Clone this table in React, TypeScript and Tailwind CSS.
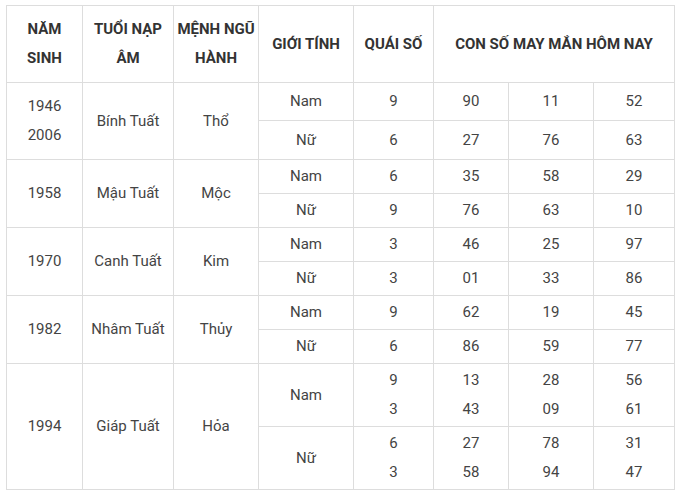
import React from "react";

const td = "border border-[#dddddd] text-center align-middle px-0 py-0";
const th = "border border-[#dddddd] text-center align-middle px-0 py-0 font-bold text-[#333333] whitespace-nowrap";

type Sub = { g: string; q: string; n: string[] };
type Group = { year: string; tuoi: string; menh: string; h: number[]; subs: Sub[] };

const groups: Group[] = [
  {
    year: "1946\n2006",
    tuoi: "Bính Tuất",
    menh: "Thổ",
    h: [38, 39],
    subs: [
      { g: "Nam", q: "9", n: ["90", "11", "52"] },
      { g: "Nữ", q: "6", n: ["27", "76", "63"] },
    ],
  },
  {
    year: "1958",
    tuoi: "Mậu Tuất",
    menh: "Mộc",
    h: [34, 34],
    subs: [
      { g: "Nam", q: "6", n: ["35", "58", "29"] },
      { g: "Nữ", q: "9", n: ["76", "63", "10"] },
    ],
  },
  {
    year: "1970",
    tuoi: "Canh Tuất",
    menh: "Kim",
    h: [34, 34],
    subs: [
      { g: "Nam", q: "3", n: ["46", "25", "97"] },
      { g: "Nữ", q: "3", n: ["01", "33", "86"] },
    ],
  },
  {
    year: "1982",
    tuoi: "Nhâm Tuất",
    menh: "Thủy",
    h: [34, 34],
    subs: [
      { g: "Nam", q: "9", n: ["62", "19", "45"] },
      { g: "Nữ", q: "6", n: ["86", "59", "77"] },
    ],
  },
  {
    year: "1994",
    tuoi: "Giáp Tuất",
    menh: "Hỏa",
    h: [63, 63],
    subs: [
      { g: "Nam", q: "9\n3", n: ["13\n43", "28\n09", "56\n61"] },
      { g: "Nữ", q: "6\n3", n: ["27\n58", "78\n94", "31\n47"] },
    ],
  },
];

function Lines({ t }: { t: string }) {
  const parts = t.split("\n");
  return (
    <>
      {parts.map((p, i) => (
        <React.Fragment key={i}>
          {i > 0 && <br />}
          {p}
        </React.Fragment>
      ))}
    </>
  );
}

export default function App() {
  return (
    <div className="w-[679px] h-[499px] bg-white pt-[5px] pl-[6px] overflow-hidden">
      <table
        className="table-fixed border-collapse w-[669px] text-[15px] leading-[29px] text-[#444444]"
        style={{ fontFamily: "Roboto, 'Noto Sans', Arial, sans-serif" }}
      >
        <colgroup>
          <col className="w-[76px]" />
          <col className="w-[91px]" />
          <col className="w-[85px]" />
          <col className="w-[95px]" />
          <col className="w-[80px]" />
          <col className="w-[75px]" />
          <col className="w-[85px]" />
          <col className="w-[81px]" />
        </colgroup>
        <tbody>
          <tr className="h-[77px]">
            <td className={th}>
              NĂM
              <br />
              SINH
            </td>
            <td className={th}>
              TUỔI NẠP
              <br />
              ÂM
            </td>
            <td className={th}>
              MỆNH NGŨ
              <br />
              HÀNH
            </td>
            <td className={th}>GIỚI TÍNH</td>
            <td className={th}>QUÁI SỐ</td>
            <td className={th} colSpan={3}>
              CON SỐ MAY MẮN HÔM NAY
            </td>
          </tr>
          {groups.map((g) =>
            g.subs.map((s, i) => (
              <tr key={g.year + i} style={{ height: g.h[i] }}>
                {i === 0 && (
                  <>
                    <td className={td} rowSpan={2}>
                      <Lines t={g.year} />
                    </td>
                    <td className={td} rowSpan={2}>
                      {g.tuoi}
                    </td>
                    <td className={td} rowSpan={2}>
                      {g.menh}
                    </td>
                  </>
                )}
                <td className={td}>{s.g}</td>
                <td className={td}>
                  <Lines t={s.q} />
                </td>
                {s.n.map((n, j) => (
                  <td key={j} className={td}>
                    <Lines t={n} />
                  </td>
                ))}
              </tr>
            ))
          )}
        </tbody>
      </table>
    </div>
  );
}
